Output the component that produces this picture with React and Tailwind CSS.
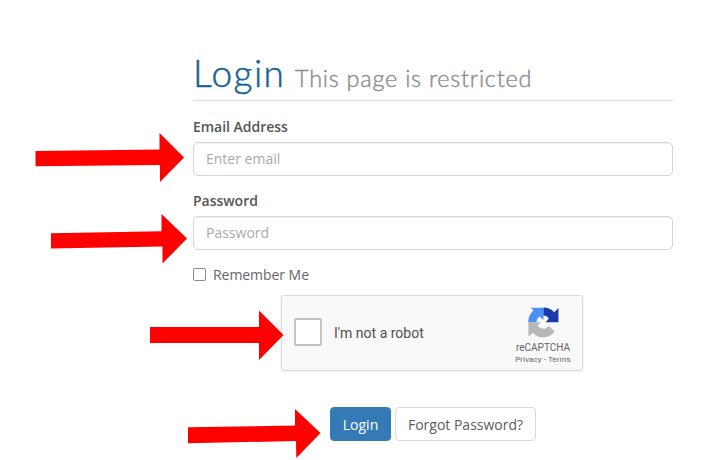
const arrows = [
  "35.5,151 159.5,149.5 159.5,133 184,157.5 160,182 160,165 35.5,166.3",
  "51,233.3 161.5,231.3 161.5,214 187,238.5 162.5,263.5 162.5,246.5 51,248.5",
  "150,327 259,327 259,310.5 283.5,335 259,360 259,343 150,343",
  "188,427.3 295,425.5 295,409 320.5,433 296.3,458 296,441 188,443.3",
];

function RecaptchaLogo() {
  return (
    <svg className="h-[31px] w-[31px]" viewBox="0 0 30.5 31">
      <path fill="#4a90f5" d="M0 15.2C0 10.5 2 6.2 5.2 3.6L2.6 0.8H15.2V13L11.3 9.6C9.2 11 8.3 13 8.3 15.2Z" />
      <path fill="#1c3aa9" d="M15.2 0.6C19.5 0.6 23.4 2.4 26 5.2L30.2 1V15.2H17.4L20.6 11.6C19.4 9.8 17.6 8.7 15.2 8.6Z" />
      <path fill="#b7b7b7" d="M0 15.2H12.6L9.3 18.6C12 22.6 17.4 23 20.6 19L26.4 24.6C20.8 32 10.4 32.4 4.5 25.8L0.3 29.8Z" />
    </svg>
  );
}

function Field({ label, type, placeholder }) {
  return (
    <label className="mb-[15px] block">
      <span className="mb-[5px] block leading-5 font-semibold tracking-[-0.03px] text-[#555]">{label}</span>
      <input
        type={type}
        placeholder={placeholder}
        className="block h-[34px] w-full rounded-[5px] border border-[#d6d6d6] bg-white px-3 shadow-[inset_0_1px_1px_rgba(0,0,0,0.06)] placeholder:text-[#aaa]"
      />
    </label>
  );
}

export default function App() {
  return (
    <main className="relative h-[460px] w-[723px] overflow-hidden bg-white pt-[54px] pl-[193px] font-['Open_Sans',sans-serif] text-[14px] text-[#666]">
      <form className="w-[480px]">
        <h1 className="mb-[15.5px] flex h-[47px] items-baseline border-b border-[#dadada] font-['Lato',sans-serif] text-[37px] leading-[38px] font-light text-[#1b6293]">
          <span className="tracking-[1.5px] [-webkit-text-stroke:0.5px_#1b6293]">Login</span>
          <small className="ml-[9.5px] text-[23.5px] font-light tracking-[0.74px] text-[#8c8c8c] [-webkit-text-stroke:0.4px_#8c8c8c]">This page is restricted</small>
        </h1>
        <Field label="Email Address" type="email" placeholder="Enter email" />
        <Field label="Password" type="password" placeholder="Password" />
        <label className="-mt-[0.5px] flex h-5 items-center gap-[7px] tracking-[-0.05px]">
          <input type="checkbox" className="h-[13px] w-[13px] appearance-none rounded-[2px] border border-[#8c8c8c] bg-white" />
          Remember Me
        </label>
        <div className="mt-[11px] ml-[88px] flex h-[76px] w-[302px] items-center rounded-[3px] border border-[#d9d9d9] bg-[#f9f9f9] pl-[12px] font-['Roboto',sans-serif] shadow-[0_0_3px_rgba(0,0,0,0.08)]">
          <span className="mb-[2px] h-[28px] w-[28px] rounded-[2px] border-2 border-[#c4c4c4] bg-white" />
          <span className="ml-[12px] w-[174px] text-[14px] text-[#505050]">I'm not a robot</span>
          <div className="mt-[5px] flex w-[70px] flex-col items-center text-[#666]">
            <RecaptchaLogo />
            <span className="mt-[4px] text-[10px] leading-[12px]">reCAPTCHA</span>
            <span className="mt-px text-[8px] leading-[10px] tracking-[0.08px]">Privacy - Terms</span>
          </div>
        </div>
        <div className="mt-[36px] ml-[137px] flex gap-[4px]">
          <button type="button" className="h-[34px] w-[61px] rounded-[4px] border border-[#337ab7] bg-[#337ab7] text-white">Login</button>
          <button type="button" className="h-[34px] w-[141px] rounded-[4px] border border-[#d9d9d9] bg-white whitespace-nowrap text-[#5c5c5c]">Forgot Password?</button>
        </div>
      </form>
      <svg className="pointer-events-none absolute inset-0 h-[460px] w-[723px]" viewBox="0 0 723 460" fill="#ff0000">
        {arrows.map((points) => (
          <polygon key={points} points={points} />
        ))}
      </svg>
    </main>
  );
}
